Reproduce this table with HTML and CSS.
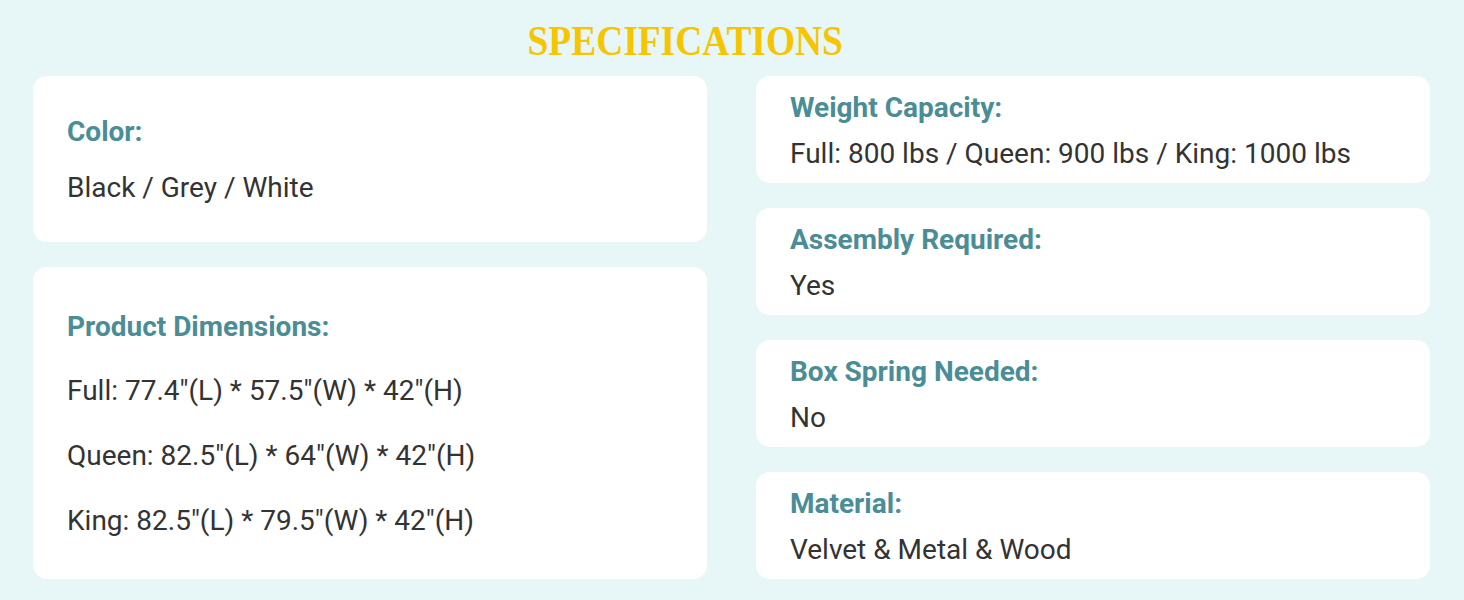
FILE: index.html
```html
<!DOCTYPE html>
<html lang="en">
<head>
<meta charset="utf-8">
<title>Specifications</title>
<link rel="stylesheet" href="styles.css">
</head>
<body>
<main class="page">
  <h1 class="title"><span class="title-text">SPECIFICATIONS</span></h1>
  <div class="grid">
    <div class="col">
      <section class="card card-color">
        <h2 class="label">Color:</h2>
        <p class="value value-color">Black / Grey / White</p>
      </section>
      <section class="card card-dims">
        <h2 class="label">Product Dimensions:</h2>
        <ul class="dims">
          <li>Full: 77.4"(L) * 57.5"(W) * 42"(H)</li>
          <li>Queen: 82.5"(L) * 64"(W) * 42"(H)</li>
          <li>King: 82.5"(L) * 79.5"(W) * 42"(H)</li>
        </ul>
      </section>
    </div>
    <div class="col">
      <section class="card card-small">
        <h2 class="label">Weight Capacity:</h2>
        <p class="value">Full: 800 lbs / Queen: 900 lbs / King: 1000 lbs</p>
      </section>
      <section class="card card-small">
        <h2 class="label">Assembly Required:</h2>
        <p class="value">Yes</p>
      </section>
      <section class="card card-small">
        <h2 class="label">Box Spring Needed:</h2>
        <p class="value">No</p>
      </section>
      <section class="card card-small">
        <h2 class="label">Material:</h2>
        <p class="value">Velvet &amp; Metal &amp; Wood</p>
      </section>
    </div>
  </div>
</main>
</body>
</html>
```

FILE: styles.css
```css
html, body {
  margin: 0;
  padding: 0;
}
body {
  background: #e7f7f8;
  width: 1464px;
  height: 600px;
  overflow: hidden;
  font-family: Roboto, "Noto Sans", sans-serif;
  color: #333333;
}
.page {
  padding: 18px 34px 0 33px;
}
.title {
  margin: 0;
  padding-right: 92px;
  text-align: center;
  font-family: "Liberation Serif", "Times New Roman", serif;
  font-weight: bold;
  font-size: 43px;
  line-height: 46px;
  color: #f6c500;
}
.title-text {
  display: inline-block;
  transform: scaleX(0.87);
}
.grid {
  margin-top: 12px;
  display: grid;
  grid-template-columns: 674px 674px;
  column-gap: 49px;
}
.col {
  display: flex;
  flex-direction: column;
  gap: 25px;
}
.card {
  background: #ffffff;
  border-radius: 14px;
  padding: 0 34px;
  box-sizing: border-box;
}
.label {
  margin: 0;
  font-size: 28px;
  line-height: 34px;
  font-weight: bold;
  color: #4b8d96;
}
.value {
  margin: 0;
  font-size: 28px;
  line-height: 34px;
}
.card-color {
  height: 166px;
  padding-top: 39px;
}
.value-color {
  margin-top: 22px;
}
.card-dims {
  height: 312px;
  padding-top: 43px;
}
.dims {
  list-style: none;
  margin: 14px 0 0;
  padding: 0;
  font-size: 28px;
  line-height: 65px;
}
.card-small {
  height: 107px;
  padding-top: 15px;
}
.card-small .value {
  margin-top: 12px;
}
```
